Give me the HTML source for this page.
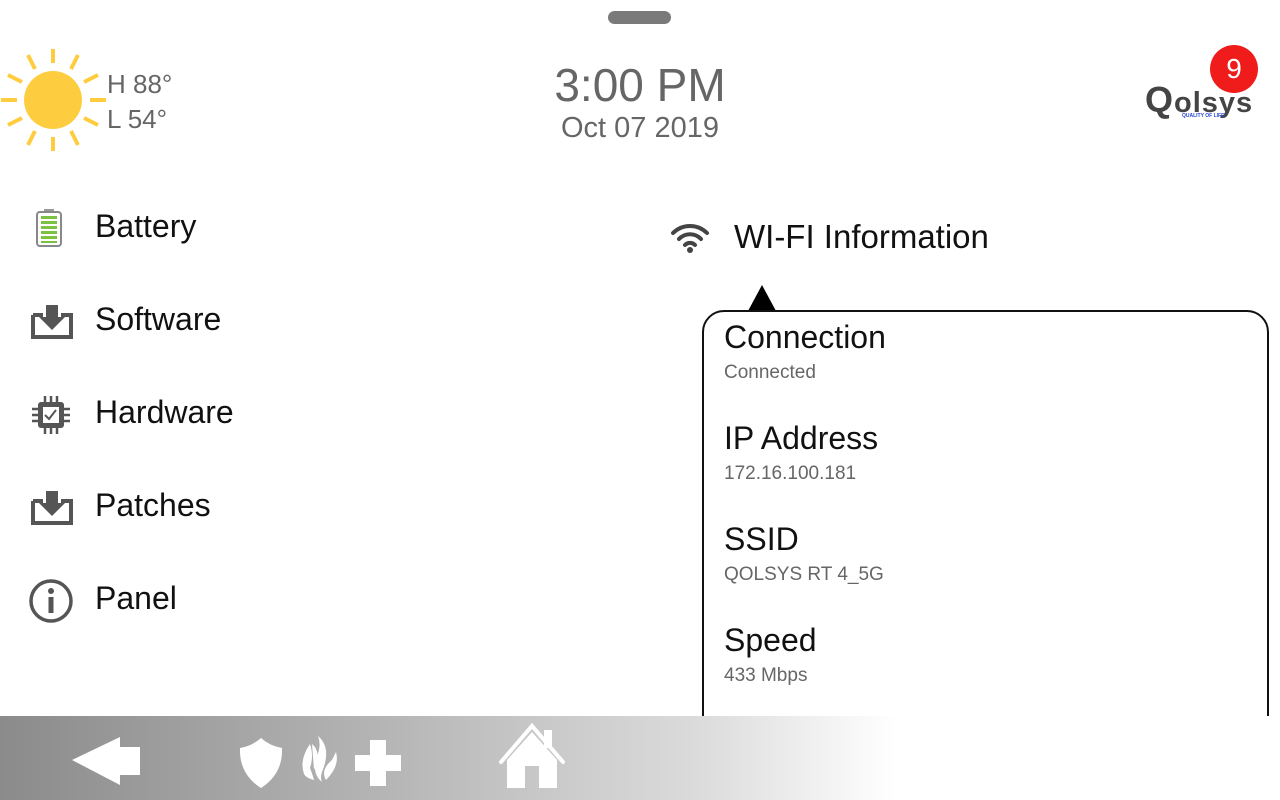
<!DOCTYPE html>
<html><head><meta charset="utf-8"><style>
*{margin:0;padding:0;box-sizing:border-box}
body{width:1280px;height:800px;overflow:hidden;background:#fff;font-family:"Liberation Sans",sans-serif;position:relative}
.a{position:absolute}
.grab{left:608px;top:11px;width:63px;height:13px;border-radius:7px;background:#7a7a7a}
.time{left:0;width:1280px;text-align:center;color:#666}
.menu{left:95px;font-size:32px;color:#111}
.panel{left:702px;top:310px;width:567px;height:460px;border:2px solid #111;border-radius:22px;background:#fff}
.h{left:724px;font-size:32px;color:#111}
.s{left:724px;font-size:19px;color:#666}
.bar{left:0;top:716px;width:1280px;height:84px;background:linear-gradient(90deg,#8b8b8b 0%,#b5b5b5 30%,#dcdcdc 55%,#fff 70%,#fff 100%)}
</style></head><body>
<div class="a grab"></div>
<svg class="a" style="left:0;top:45px" width="110" height="110" viewBox="0 0 110 110">
<circle cx="53" cy="55" r="29" fill="#fecd3f"/>
<g stroke="#fecd3f" stroke-width="4">
<line x1="53" y1="4" x2="53" y2="18"/><line x1="53" y1="92" x2="53" y2="106"/>
<line x1="1" y1="55" x2="17" y2="55"/><line x1="90" y1="55" x2="106" y2="55"/>
<line x1="28" y1="10" x2="35" y2="24"/><line x1="78" y1="10" x2="71" y2="24"/>
<line x1="28" y1="100" x2="35" y2="86"/><line x1="78" y1="100" x2="71" y2="86"/>
<line x1="8" y1="30" x2="22" y2="37"/><line x1="98" y1="30" x2="84" y2="37"/>
<line x1="8" y1="80" x2="22" y2="73"/><line x1="98" y1="80" x2="84" y2="73"/>
</g></svg>
<div class="a" style="left:107px;top:67px;font-size:26px;color:#666;line-height:35px">H 88°<br>L 54°</div>
<div class="a time" style="top:58px;font-size:46px">3:00 PM</div>
<div class="a time" style="top:112px;font-size:29px">Oct 07 2019</div>
<div class="a" style="left:1210px;top:45px;width:48px;height:48px;border-radius:50%;background:#f01c1c;color:#fff;font-size:28px;text-align:center;line-height:48px">9</div>
<div class="a" style="left:1145px;top:82px;font-size:36px;font-weight:bold;color:#444;letter-spacing:1px;line-height:36px">Q<span style="font-size:29px">olsys</span></div>
<div class="a" style="left:1182px;top:113px;font-size:5px;color:#2746d6;font-weight:bold">QUALITY OF LIFE</div>
<svg class="a" style="left:35px;top:208px" width="28" height="40" viewBox="0 0 28 40"><rect x="9" y="1" width="10" height="4" fill="#999"/><rect x="2" y="4" width="24" height="34" rx="3" fill="none" stroke="#888" stroke-width="2"/><g fill="#7cc242"><rect x="6" y="8" width="16" height="3"/><rect x="6" y="13" width="16" height="3"/><rect x="6" y="18" width="16" height="3"/><rect x="6" y="23" width="16" height="3"/><rect x="6" y="28" width="16" height="3"/><rect x="6" y="33" width="16" height="2"/></g></svg>
<div class="a menu" style="top:208px">Battery</div>
<svg class="a" style="left:31px;top:303px" width="42" height="36" viewBox="0 0 42 36"><path d="M2 12h10M30 12h10v22H2V12" fill="none" stroke="#555" stroke-width="4"/><path d="M15 2h12v12h7L21 27 8 14h7z" fill="#555"/></svg>
<div class="a menu" style="top:301px">Software</div>
<svg class="a" style="left:31px;top:395px" width="40" height="40" viewBox="0 0 40 40"><rect x="7" y="7" width="26" height="26" rx="3" fill="#555"/><g stroke="#555" stroke-width="2.5"><path d="M14 1v6M20 1v6M26 1v6M14 33v6M20 33v6M26 33v6M1 14h6M1 20h6M1 26h6M33 14h6M33 20h6M33 26h6"/></g><rect x="12" y="12" width="16" height="16" fill="#fff"/><path d="M14 20l4 4 7-9" stroke="#555" stroke-width="2" fill="none"/></svg>
<div class="a menu" style="top:394px">Hardware</div>
<svg class="a" style="left:31px;top:489px" width="42" height="36" viewBox="0 0 42 36"><path d="M2 12h10M30 12h10v22H2V12" fill="none" stroke="#555" stroke-width="4"/><path d="M15 2h12v12h7L21 27 8 14h7z" fill="#555"/></svg>
<div class="a menu" style="top:487px">Patches</div>
<svg class="a" style="left:28px;top:578px" width="46" height="46" viewBox="0 0 46 46"><circle cx="23" cy="23" r="20" fill="none" stroke="#555" stroke-width="3.5"/><circle cx="23" cy="13" r="3" fill="#555"/><rect x="20.5" y="19" width="5" height="16" fill="#555"/></svg>
<div class="a menu" style="top:580px">Panel</div>
<svg class="a" style="left:670px;top:222px" width="40" height="32" viewBox="0 0 40 32"><g fill="none" stroke="#444" stroke-width="4" stroke-linecap="round"><path d="M3 11a24 24 0 0 1 34 0"/><path d="M9 17a15 15 0 0 1 22 0"/><path d="M15 23a7 7 0 0 1 10 0"/></g><circle cx="20" cy="28" r="3" fill="#444"/></svg>
<div class="a" style="left:734px;top:218px;font-size:33px;color:#111">WI-FI Information</div>
<svg class="a" style="left:746px;top:284px" width="32" height="28"><path d="M16 1L2 27h28z" fill="#000"/></svg>
<div class="a panel"></div>
<div class="a h" style="top:319px">Connection</div><div class="a s" style="top:362px">Connected</div>
<div class="a h" style="top:420px">IP Address</div><div class="a s" style="top:463px">172.16.100.181</div>
<div class="a h" style="top:521px">SSID</div><div class="a s" style="top:564px">QOLSYS RT 4_5G</div>
<div class="a h" style="top:622px">Speed</div><div class="a s" style="top:665px">433 Mbps</div>
<div class="a bar"></div>
<svg class="a" style="left:0;top:716px" width="600" height="84" viewBox="0 0 600 84">
<path d="M72 44L120 21v10h20v28h-20v10z" fill="#fff"/>
<path d="M261 22q9 8 21 10q1 26-21 40q-22-14-21-40q12-2 21-10z" fill="#fff"/>
<path d="M304 58q-5-14 6-30q4 12 0 24q3 8 4 12q-8-2-10-6zM312 28q10 8 2 26M318 20q14 12 4 36q-2 6 0 10q-10-8-6-24q6-12 2-22zM326 64q-6-10 6-20q2-4 4-8q4 14-10 28z" fill="#fff"/>
<path d="M370 24h16v15h15v16h-15v15h-16v-15h-15v-16h15z" fill="#fff"/>
<path d="M507 72V44l25-28 25 28v28h-18V50h-14v22z" fill="#fff"/><path d="M501 46l31-36 31 36" fill="none" stroke="#fff" stroke-width="4" stroke-linecap="round"/><rect x="544" y="14" width="8" height="18" fill="#fff"/>
</svg>
</body></html>
